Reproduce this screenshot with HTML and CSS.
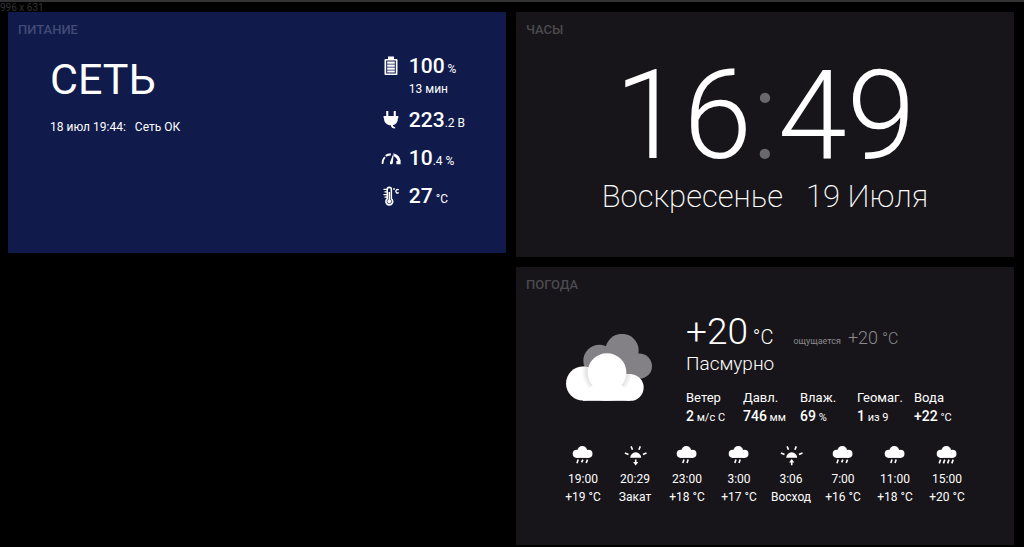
FILE: index.html
```html
<!DOCTYPE html>
<html lang="ru">
<head>
<meta charset="utf-8">
<title>Панель</title>
<link rel="stylesheet" href="styles.css">
</head>
<body>
<svg class="defs" aria-hidden="true">
  <symbol id="cloud" viewBox="0 0 24 22">
    <circle cx="5.8" cy="9.8" r="4.1"/><circle cx="11.3" cy="6.9" r="4.9"/><circle cx="17.4" cy="9.8" r="4.1"/>
    <rect x="5.8" y="8" width="11.6" height="5.9"/>
  </symbol>
  <symbol id="rain2" viewBox="0 0 24 22"><use href="#cloud" width="24" height="22"/><path class="drop" d="M9 15.600L7.800 19M13.200 15.600L12 19"/></symbol>
  <symbol id="rain3" viewBox="0 0 24 22"><use href="#cloud" width="24" height="22"/><path class="drop" d="M7.200 15.600L6 19.200M11.900 15.600L10.600 18.400M16.500 15.600L15.200 19"/></symbol>
  <symbol id="rain4" viewBox="0 0 24 22"><use href="#cloud" width="24" height="22"/><path class="drop" d="M5.600 15.600L4.200 19.400M9.800 15.600L8.400 19.400M14 15.600L12.600 19.400M18.200 15.600L16.800 19.400"/></symbol>
  <symbol id="sun" viewBox="0 0 24 22"><path d="M7.200 13.800a5.500 5.500 0 0 1 11 0z"/><path class="ray" d="M1.900 8.900L5.500 10.400M23.500 8.900L19.900 10.400M8.100 2.400L9.500 5.800M17.300 2.400L15.900 5.800"/></symbol>
  <symbol id="sunset" viewBox="0 0 24 22"><use href="#sun" width="24" height="22"/><path d="M11.900 15.400h1.600v2.500h1.800l-2.600 3.600-2.600-3.600h1.800z"/></symbol>
  <symbol id="sunrise" viewBox="0 0 24 22"><use href="#sun" width="24" height="22"/><path d="M11.900 21.300h1.600v-2.700h1.800l-2.600-3.600-2.600 3.600h1.800z"/></symbol>
</svg>
<div class="size-note">996 x 631</div>
<main class="board">
  <section class="panel power">
    <h2 class="title">Питание</h2>
    <div class="power-body">
      <div class="supply">
        <div class="supply-name">СЕТЬ</div>
        <div class="supply-log"><span>18 июл 19:44:</span><span>Сеть ОК</span></div>
      </div>
      <ul class="readings">
        <li class="reading">
          <svg class="meter" viewBox="0 0 20 20"><path fill-rule="evenodd" d="M7 .5h6V3h2.500q1 0 1 1v14q0 1-1 1h-11q-1 0-1-1V4q0-1 1-1H7zM5.200 4.600v12.800h9.600V4.600z"/><path d="M6.200 5.600h7.600v2.100H6.200zM6.200 8.600h7.600v2.100H6.200zM6.200 11.600h7.600v2.100H6.200zM6.200 14.500h7.600v2H6.200z"/></svg>
          <div><div class="value">100<small> %</small></div><div class="remain">13 мин</div></div>
        </li>
        <li class="reading">
          <svg class="meter" viewBox="0 0 20 20"><path d="M5.200 1h2.100v5h5.400V1h2.100v5h2.500v2.200h-.4c0 4-2 6.400-5 7 .1 1.200.8 1.800 2.200 1.900v1.500c-2.600 0-4-1.100-4.200-3.300C5.600 15 3 12.500 3 8.200h-.4V6h2.600z"/></svg>
          <div class="value">223<small>.2 В</small></div>
        </li>
        <li class="reading">
          <svg class="meter" viewBox="0 0 20 20"><g fill="none" stroke="#fff"><path stroke-width="1.600" d="M1.500 16c-.2-2.900.8-5.300 2.500-6.800"/><path stroke-width="2.200" d="M4.800 7.800c1.400-1 3-1.500 5-1.500"/><path stroke-width="3" d="M13 6.800c2.800 1 4.700 3.300 5.300 6.500"/></g><path d="M15.400 13h4.200v3.200h-4.200zM12.800 4.300l-1 10.800c-.2 1.800-3.200 1.500-2.900-.4z"/></svg>
          <div class="value">10<small>.4 %</small></div>
        </li>
        <li class="reading">
          <svg class="meter" viewBox="0 0 20 20"><path fill-rule="evenodd" d="M5.500 3.400a2.800 2.800 0 0 1 5.600 0v9a4.200 4.200 0 1 1-5.600 0zM7 3.500v9.700a2.600 2.600 0 1 0 2.600 0V3.500a1.300 1.300 0 0 0-2.600 0z"/><path d="M7.600 6h1.400v7.700a1.900 1.900 0 1 1-1.400 0zM2.500 2.700h4v1.200h-4zM3.500 5.300h3v1.200h-3zM2.500 8h4v1.200h-4zM3.500 10.600h3v1.200h-3z"/><circle cx="13" cy="3" r=".9"/><path fill="none" stroke="#fff" stroke-width="1.300" d="M17.700 4a1.700 1.700 0 1 0 0 2.500"/></svg>
          <div class="value">27<small> °C</small></div>
        </li>
      </ul>
    </div>
  </section>
  <div class="column">
    <section class="panel clock">
      <h2 class="title">Часы</h2>
      <time class="time">16<span class="colon">:</span>49</time>
      <div class="date"><span>Воскресенье</span><span>19 Июля</span></div>
    </section>
    <section class="panel weather">
      <h2 class="title">Погода</h2>
      <div class="current">
        <svg class="overcast" viewBox="0 0 258 200">
          <defs>
            <clipPath id="sides"><circle cx="51" cy="148" r="51"/><circle cx="193" cy="160" r="40"/></clipPath>
            <radialGradient id="shade"><stop offset=".75" stop-color="#ddd"/><stop offset="1" stop-color="#fff"/></radialGradient>
          </defs>
          <g class="back"><circle cx="168" cy="49" r="50"/><circle cx="100" cy="80" r="48"/><circle cx="220" cy="96" r="38"/><rect x="100" y="70" width="120" height="64"/></g>
          <g><circle cx="51" cy="148" r="51"/><circle cx="193" cy="160" r="40"/><rect x="51" y="120" width="142" height="80"/></g>
          <circle cx="123" cy="112" r="76" fill="url(#shade)" clip-path="url(#sides)"/>
          <circle cx="123" cy="115" r="58"/><ellipse cx="123" cy="172" rx="58" ry="28"/>
        </svg>
        <div class="now">
          <div class="temps">
            <div class="temp">+20<small> °C</small></div>
            <div class="feels"><small>ощущается</small><span>+20<span class="unit"> °C</span></span></div>
          </div>
          <div class="condition">Пасмурно</div>
          <dl class="stats">
            <div><dt>Ветер</dt><dd>2<small> м/с С</small></dd></div>
            <div><dt>Давл.</dt><dd>746<small> мм</small></dd></div>
            <div><dt>Влаж.</dt><dd>69<small> %</small></dd></div>
            <div><dt>Геомаг.</dt><dd>1<small> из 9</small></dd></div>
            <div><dt>Вода</dt><dd>+22<small> °C</small></dd></div>
          </dl>
        </div>
      </div>
      <ol class="forecast">
        <li><svg class="sky"><use href="#rain3"/></svg><span>19:00</span><span>+19 °C</span></li>
        <li><svg class="sky"><use href="#sunset"/></svg><span>20:29</span><span>Закат</span></li>
        <li><svg class="sky"><use href="#rain2"/></svg><span>23:00</span><span>+18 °C</span></li>
        <li><svg class="sky"><use href="#rain2"/></svg><span>3:00</span><span>+17 °C</span></li>
        <li><svg class="sky"><use href="#sunrise"/></svg><span>3:06</span><span>Восход</span></li>
        <li><svg class="sky"><use href="#rain3"/></svg><span>7:00</span><span>+16 °C</span></li>
        <li><svg class="sky"><use href="#rain2"/></svg><span>11:00</span><span>+18 °C</span></li>
        <li><svg class="sky"><use href="#rain4"/></svg><span>15:00</span><span>+20 °C</span></li>
      </ol>
    </section>
  </div>
</main>
</body>
</html>
```
FILE: styles.css
```css
* { box-sizing: border-box; }
body {
  margin: 0;
  background: #000;
  color: #fff;
  font: 400 12px/16px Roboto, "Open Sans", sans-serif;
  border-top: 2px solid #333335;
}
ul, ol, dl, dd, h2 { margin: 0; padding: 0; list-style: none; }
svg { display: block; fill: #fff; flex: none; }
small { line-height: 1; }
.defs { position: absolute; width: 0; height: 0; }
.size-note {
  height: 10px;
  line-height: 12px;
  font-size: 10px;
  color: #333;
}
.board {
  display: grid;
  grid-template-columns: 1fr 1fr;
  gap: 10px;
  align-items: start;
  padding: 0 10px 2px 8px;
}
.column { display: grid; gap: 10px; }
.panel { background: #17151a; padding: 10px; }
.title {
  font-size: 13px;
  line-height: 16px;
  font-weight: 500;
  text-transform: uppercase;
  color: #4b4a4e;
}

.power { background: #101a4b; padding-bottom: 44px; }
.power .title { color: #424b74; }
.power-body { display: flex; justify-content: space-between; padding: 15px 31px 0 32px; }
.supply-name { font-size: 43px; line-height: 52px; }
.supply-log { display: flex; gap: 9px; margin-top: 14px; }
.readings { display: grid; gap: 12px; }
.reading { display: flex; gap: 8px; }
.meter { width: 20px; height: 20px; margin-top: 3px; }
.value { font-size: 21px; line-height: 26px; font-weight: 500; }
.value small { font-size: 12px; font-weight: 400; }
.remain { line-height: 12px; margin-top: 4px; }

.clock { padding-bottom: 43px; }
.time {
  display: block;
  margin-top: 16px;
  text-align: center;
  font-size: 124px;
  line-height: 124px;
  font-weight: 300;
}
.colon { color: #69686b; }
.date {
  display: flex;
  justify-content: center;
  gap: 23px;
  font-size: 31px;
  line-height: 38px;
  margin-bottom: -2px;
  font-weight: 200;
}

.weather { padding-bottom: 39px; }
.current { display: flex; gap: 34px; padding: 19px 0 0 40px; }
.overcast { width: 86px; height: 67px; margin-top: 22px; }
.back { fill: #838185; }
.temps { display: flex; align-items: baseline; gap: 20px; }
.temp { font-size: 37px; line-height: 40px; font-weight: 300; }
.temp small { font-size: 20px; }
.feels { display: flex; align-items: baseline; gap: 7px; font-size: 18px; font-weight: 300; color: #8a898c; }
.feels small { font-size: 9px; font-weight: 400; }
.unit { font-size: 16px; }
.condition { font-size: 19px; line-height: 24px; font-weight: 300; }
.stats { display: grid; grid-template-columns: repeat(5, 57px); margin-top: 14px; }
.stats dt { font-size: 13px; }
.stats dd { font-size: 14px; line-height: 20px; font-weight: 500; white-space: nowrap; }
.stats small { font-size: 11px; font-weight: 400; }
.forecast {
  display: grid;
  grid-template-columns: repeat(8, 52px);
  justify-content: center;
  margin-top: 18px;
  line-height: 18px;
  text-align: center;
}
.forecast li { display: grid; justify-items: center; }
.sky { width: 24px; height: 22px; margin-bottom: 4px; }
.drop { fill: none; stroke: #fff; stroke-width: 1.6; }
.ray { fill: none; stroke: #fff; stroke-width: 1.6; }
```
